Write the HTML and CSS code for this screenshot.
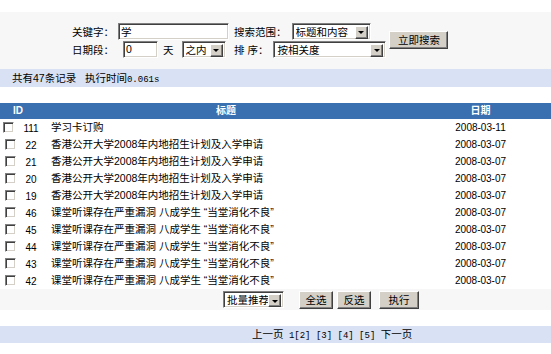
FILE: index.html
```html
<!DOCTYPE html>
<html lang="zh-CN">
<head>
<meta charset="utf-8">
<title>搜索结果</title>
<link rel="stylesheet" href="styles.css">
</head>
<body>
<form class="search">
  <div class="search-grid">
    <span class="lbl">关键字：</span>
    <div class="field"><input class="txt txt-kw" type="text" value="学"></div>
    <div class="field2"><span class="lbl2">搜索范围：</span><span class="sel sel-scope"><select><option>标题和内容</option></select><span class="arrow"></span></span></div>
    <div class="btn-cell"><button type="button" class="btn btn-search">立即搜索</button></div>
    <span class="lbl">日期段：</span>
    <div class="field"><input class="txt txt-day" type="text" value="0"><span class="unit">天</span><span class="sel sel-range"><select><option>之内</option></select><span class="arrow"></span></span></div>
    <div class="field2"><span class="lbl2">排 序：</span><span class="sel sel-order"><select><option>按相关度</option></select><span class="arrow"></span></span></div>
  </div>
</form>
<div class="bar stats">共有47条记录&nbsp;&nbsp;&nbsp;执行时间<span class="mono">0.061s</span></div>
<table class="list">
  <colgroup><col class="c-id"><col class="c-title"><col class="c-date"></colgroup>
  <thead>
    <tr><th class="th-id">ID</th><th>标题</th><th>日期</th></tr>
  </thead>
  <tbody>
    <tr><td><div class="idbox"><input type="checkbox" class="chk"><span>111</span></div></td><td><div class="cell title">学习卡订购</div></td><td><div class="cell date">2008-03-11</div></td></tr>
    <tr><td><div class="idbox"><input type="checkbox" class="chk"><span>22</span></div></td><td><div class="cell title">香港公开大学2008年内地招生计划及入学申请</div></td><td><div class="cell date">2008-03-07</div></td></tr>
    <tr><td><div class="idbox"><input type="checkbox" class="chk"><span>21</span></div></td><td><div class="cell title">香港公开大学2008年内地招生计划及入学申请</div></td><td><div class="cell date">2008-03-07</div></td></tr>
    <tr><td><div class="idbox"><input type="checkbox" class="chk"><span>20</span></div></td><td><div class="cell title">香港公开大学2008年内地招生计划及入学申请</div></td><td><div class="cell date">2008-03-07</div></td></tr>
    <tr><td><div class="idbox"><input type="checkbox" class="chk"><span>19</span></div></td><td><div class="cell title">香港公开大学2008年内地招生计划及入学申请</div></td><td><div class="cell date">2008-03-07</div></td></tr>
    <tr><td><div class="idbox"><input type="checkbox" class="chk"><span>46</span></div></td><td><div class="cell title">课堂听课存在严重漏洞 八成学生 “当堂消化不良”</div></td><td><div class="cell date">2008-03-07</div></td></tr>
    <tr><td><div class="idbox"><input type="checkbox" class="chk"><span>45</span></div></td><td><div class="cell title">课堂听课存在严重漏洞 八成学生 “当堂消化不良”</div></td><td><div class="cell date">2008-03-07</div></td></tr>
    <tr><td><div class="idbox"><input type="checkbox" class="chk"><span>44</span></div></td><td><div class="cell title">课堂听课存在严重漏洞 八成学生 “当堂消化不良”</div></td><td><div class="cell date">2008-03-07</div></td></tr>
    <tr><td><div class="idbox"><input type="checkbox" class="chk"><span>43</span></div></td><td><div class="cell title">课堂听课存在严重漏洞 八成学生 “当堂消化不良”</div></td><td><div class="cell date">2008-03-07</div></td></tr>
    <tr><td><div class="idbox"><input type="checkbox" class="chk"><span>42</span></div></td><td><div class="cell title">课堂听课存在严重漏洞 八成学生 “当堂消化不良”</div></td><td><div class="cell date">2008-03-07</div></td></tr>
    <tr class="actions"><td colspan="3"><div class="action-box"><span class="sel sel-batch"><select><option>批量推荐</option></select><span class="arrow"></span></span><button type="button" class="btn btn-all">全选</button><button type="button" class="btn btn-inv">反选</button><button type="button" class="btn btn-run">执行</button></div></td></tr>
  </tbody>
</table>
<div class="bar pager">上一页<span class="mono"> 1[2] [3] [4] [5] </span>下一页</div>
</body>
</html>
```

FILE: styles.css
```css
html, body {
  margin: 0;
  padding: 0;
  background: #ffffff;
}
body {
  font-family: "Liberation Sans", "Noto Sans CJK SC", sans-serif;
  font-size: 10.5px;
  color: #000;
}
.mono {
  font-family: "Liberation Mono", monospace;
  font-size: 9px;
}

.search {
  margin: 12px 0 0;
  height: 57px;
  box-sizing: border-box;
  padding: 10px 0 0 72px;
  background: #f7f7f7;
}
.search-grid {
  display: grid;
  grid-template-columns: 46px 116px auto auto;
  grid-template-rows: 18px 18px;
  justify-content: start;
  align-items: center;
}
.lbl { white-space: nowrap; }
.field, .field2 {
  display: flex;
  align-items: center;
}
.lbl2 { margin-right: 5px; white-space: nowrap; }
.btn-cell {
  grid-row: 1 / 3;
  grid-column: 4;
  align-self: center;
  padding-left: 3px;
}

.txt {
  box-sizing: border-box;
  height: 17px;
  border: 1px solid;
  border-color: #808080 #ffffff #ffffff #808080;
  box-shadow: inset 1px 1px #404040, inset -1px -1px #d4d0c8;
  background: #fff;
  font: inherit;
  padding: 0 2px;
  margin: 0;
  outline: none;
}
.txt-kw { width: 111px; }
.txt-day { width: 35px; margin-left: 5px; }
.unit { margin: 0 8px 0 5px; }

.sel {
  box-sizing: border-box;
  display: inline-flex;
  align-items: stretch;
  height: 17px;
  border: 1px solid;
  border-color: #808080 #ffffff #ffffff #808080;
  box-shadow: inset 1px 1px #404040, inset -1px -1px #d4d0c8;
  background: #fff;
  padding: 2px;
}
.sel select {
  appearance: none;
  -webkit-appearance: none;
  flex: 1;
  min-width: 0;
  border: 0;
  background: transparent;
  font: inherit;
  color: #000;
  padding: 0 0 0 1px;
  margin: 0;
  height: 13px;
  line-height: 13px;
  outline: none;
}
.arrow {
  box-sizing: border-box;
  width: 13px;
  height: 13px;
  flex: none;
  background: #d4d0c8;
  border: 1px solid;
  border-color: #ffffff #404040 #404040 #ffffff;
  box-shadow: inset -1px -1px #808080;
  display: flex;
  align-items: center;
  justify-content: center;
}
.arrow::before {
  content: "";
  display: block;
  width: 0;
  height: 0;
  border-left: 3px solid transparent;
  border-right: 3px solid transparent;
  border-top: 3px solid #000;
  margin-top: 1px;
}
.sel-scope { width: 79px; }
.sel-range { width: 44px; }
.sel-order { width: 113px; }
.sel-batch { width: 61px; }

.btn {
  box-sizing: border-box;
  height: 18px;
  background: #d4d0c8;
  border: 1px solid;
  border-color: #ffffff #404040 #404040 #ffffff;
  box-shadow: inset -1px -1px #808080;
  font: inherit;
  color: #000;
  padding: 0 6px;
  margin: 0;
  line-height: 14px;
}
.btn-search { width: 59px; }

.bar {
  background: #d9e2f4;
  height: 18px;
  line-height: 18px;
}
.stats { padding-left: 12px; }

.list {
  width: 100%;
  margin-top: 16px;
  border-collapse: collapse;
  border-spacing: 0;
  table-layout: fixed;
}
.c-id { width: 42px; }
.c-date { width: 141px; }
.list th {
  background: #3a70b0;
  color: #fff;
  font-weight: bold;
  height: 16px;
  padding: 0;
  text-align: center;
  line-height: 16px;
  font-size: 10px;
}
.list th.th-id { text-align: left; padding-left: 13px; }
.list td {
  padding: 0;
  vertical-align: middle;
}
.cell {
  height: 17px;
  line-height: 17px;
  white-space: nowrap;
  overflow: hidden;
}
.title { padding-left: 9px; }
.date { text-align: center; font-size: 10px; }
.idbox {
  display: flex;
  justify-content: center;
  align-items: center;
  gap: 9px;
  height: 17px;
}
.idbox span { font-size: 10px; line-height: 10px; padding-top: 3px; }
.chk {
  appearance: none;
  -webkit-appearance: none;
  box-sizing: border-box;
  width: 11px;
  height: 11px;
  margin: 0;
  border: 1px solid;
  border-color: #808080 #ffffff #ffffff #808080;
  box-shadow: inset 1px 1px #404040, inset -1px -1px #d4d0c8;
  background: #fff;
}

.actions td {
  background: #f7f7f7;
}
.action-box {
  display: flex;
  align-items: center;
  height: 21px;
  padding-left: 223px;
}
.btn-all { width: 34px; margin-left: 15px; padding: 0; }
.btn-inv { width: 34px; margin-left: 4px; padding: 0; }
.btn-run { width: 40px; margin-left: 8px; padding: 0; }

.pager {
  margin-top: 16px;
  height: 17px;
  line-height: 17px;
  padding-left: 252px;
  white-space: pre;
}
```
